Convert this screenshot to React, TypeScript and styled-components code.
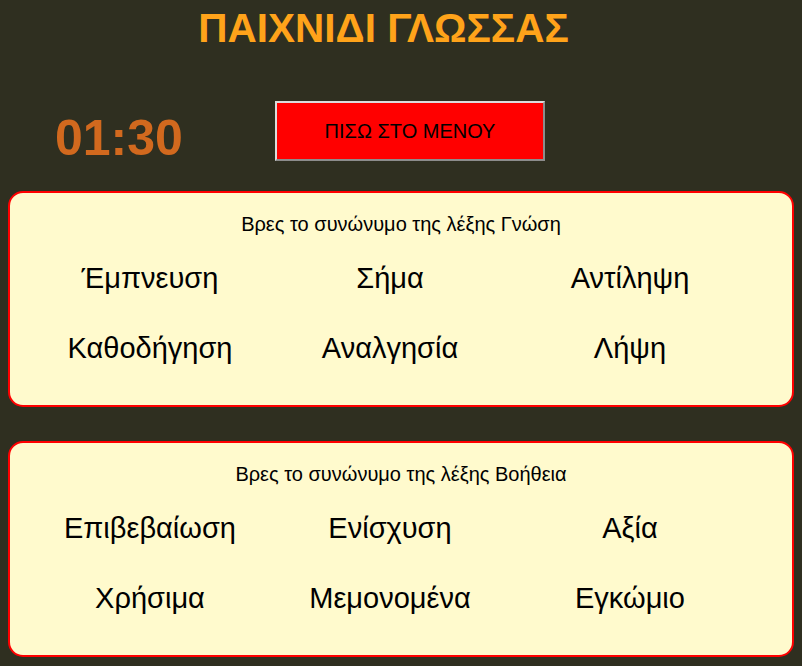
import React from "react";
import styled, { createGlobalStyle } from "styled-components";

const Global = createGlobalStyle`
  html, body { background: #2f2f20; }
  body { margin: 8px; font-family: "Liberation Sans", Arial, sans-serif; }
`;

const Title = styled.h1`
  margin: 0;
  padding-right: 35px;
  text-align: center;
  font-size: 40.5px;
  line-height: 40px;
  font-weight: bold;
  color: #ffa31a;
`;

const TopBar = styled.div`
  display: flex;
  align-items: center;
  margin-top: 53px;
  height: 60px;
  padding-left: 47px;
`;

const Timer = styled.div`
  width: 220px;
  font-size: 50px;
  font-weight: bold;
  color: #d2691e;
  padding-top: 14px;
`;

const MenuButton = styled.button`
  width: 270px;
  height: 60px;
  background: #ff0000;
  color: #000;
  font-family: "Liberation Sans", Arial, sans-serif;
  font-size: 20px;
  border-width: 2px;
  border-style: solid;
  border-color: #dcdcdc #8c8c8c #8c8c8c #dcdcdc;
  cursor: pointer;
`;

const Cards = styled.div`
  display: flex;
  flex-direction: column;
  gap: 34px;
  margin-top: 30px;
`;

const Card = styled.section`
  background: #fffacd;
  border: 2px solid #ff0000;
  border-radius: 15px;
  height: 216px;
  box-sizing: border-box;
  padding: 19px 0 0;
`;

const Prompt = styled.div`
  text-align: center;
  font-size: 20px;
  color: #000;
  line-height: 24px;
`;

const Options = styled.div`
  display: grid;
  grid-template-columns: repeat(3, 240px);
  grid-auto-rows: 70px;
  padding-left: 20px;
  margin-top: 7px;
`;

const Option = styled.div`
  display: flex;
  align-items: center;
  justify-content: center;
  font-size: 29px;
  color: #000;
  cursor: pointer;
`;

const rounds = [
  {
    word: "Γνώση",
    options: ["Έμπνευση", "Σήμα", "Αντίληψη", "Καθοδήγηση", "Αναλγησία", "Λήψη"],
  },
  {
    word: "Βοήθεια",
    options: ["Επιβεβαίωση", "Ενίσχυση", "Αξία", "Χρήσιμα", "Μεμονομένα", "Εγκώμιο"],
  },
];

export default function App() {
  return (
    <>
      <Global />
      <Title>ΠΑΙΧΝΙΔΙ ΓΛΩΣΣΑΣ</Title>
      <TopBar>
        <Timer>01:30</Timer>
        <MenuButton>ΠΙΣΩ ΣΤΟ ΜΕΝΟΥ</MenuButton>
      </TopBar>
      <Cards>
        {rounds.map((r) => (
          <Card key={r.word}>
            <Prompt>Βρες το συνώνυμο της λέξης {r.word}</Prompt>
            <Options>
              {r.options.map((o) => (
                <Option key={o}>{o}</Option>
              ))}
            </Options>
          </Card>
        ))}
      </Cards>
    </>
  );
}
